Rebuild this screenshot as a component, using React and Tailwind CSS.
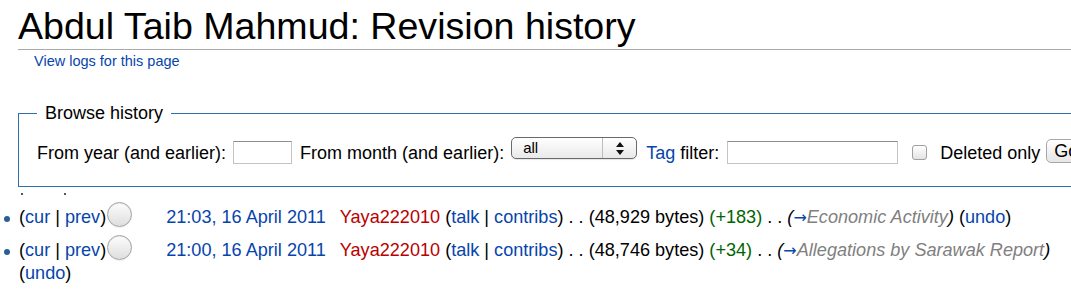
import React from "react";

const link = "text-[#0645ad]";

function Radio() {
  return (
    <span className="inline-block ml-[1px] mr-[34px] mb-[-4px] w-[25px] h-[25px] rounded-full border border-[#a3a3a3] bg-gradient-to-b from-[#fdfdfd] to-[#dedede] shadow-[inset_0_1px_1px_rgba(0,0,0,0.08),0_1px_1px_rgba(0,0,0,0.06)] align-baseline" />
  );
}

function HistoryRow({ time, size, diff, section }) {
  return (
    <li className="relative mb-[6px]">
      {/* bullet */}
      <span className="absolute left-[-15px] top-[14px] w-[6px] h-[6px] rounded-full bg-[#2b5e96]" />
      (<a className={link}>cur</a> | <a className={link}>prev</a>)
      <Radio />
      <a className={link}>{time}</a>{" "}
      <a className="ml-[9px] text-[#ba0000]">Yaya222010</a>{" "}
      (<a className={link}>talk</a> | <a className={link}>contribs</a>){" "}
      . . ({size} bytes){" "}
      <span className="text-[#006400]">({diff})</span>{" "}
      . .{" "}
      <span className="italic">
        (<a className={`${link} not-italic font-['DejaVu_Sans',sans-serif] text-[16px]`}>→</a>
        <span className="text-[#808080]">{section}</span>)
      </span>{" "}
      (<a className={link}>undo</a>)
    </li>
  );
}

function TextInput({ width }) {
  return (
    <span
      className={`block h-[23px] bg-white border border-[#c4c4c4] border-t-[#8e8e8e] ${width}`}
    />
  );
}

export default function App() {
  return (
    <div className="w-[1071px] h-[301px] overflow-hidden bg-white text-black font-['Liberation_Sans',Arial,sans-serif]">
      <div className="ml-[18px]">
        <h1 className="pt-[4px] text-[37.6px] leading-[45px] font-normal border-b border-[#aaaaaa] whitespace-nowrap">
          Abdul Taib Mahmud: Revision history
        </h1>
        <div className="mt-[2px] ml-[16px] text-[14.5px] leading-[18px]">
          <a className={link}>View logs for this page</a>
        </div>

        <fieldset className="mt-[32px] w-[1100px] border border-[#2f6fab] pl-[18px] pb-[21px]">
          <legend className="px-[8px] text-[18px] leading-[22px]">Browse history</legend>
          <div className="flex items-start h-[24px] mt-[17px] text-[18px] leading-[24px] whitespace-nowrap">
            <span>From year (and earlier):</span>
            <span className="ml-[7px]">
              <TextInput width="w-[59px]" />
            </span>
            <span className="ml-[8px]">From month (and earlier):</span>
            {/* select */}
            <span className="ml-[7px] mt-[-4px] flex h-[22px] w-[126px] rounded-[5px] border border-[#6a6a6a] bg-gradient-to-b from-white to-[#e9e9e9] shadow-[0_1px_1px_rgba(0,0,0,0.1)]">
              <span className="flex-1 pl-[11px] text-[15px] leading-[20px]">all</span>
              <span className="flex w-[34px] items-center justify-center border-l border-[#bdbdbd]">
                <svg width="8" height="13" viewBox="0 0 8 13">
                  <path d="M4 0 L8 5 L0 5 Z" fill="#111" />
                  <path d="M0 8 L8 8 L4 13 Z" fill="#111" />
                </svg>
              </span>
            </span>
            <span className="ml-[9px]">
              <a className={link}>Tag</a> filter:
            </span>
            <span className="ml-[8px]">
              <TextInput width="w-[171px]" />
            </span>
            {/* checkbox */}
            <span className="ml-[14px] mt-[4px] h-[15px] w-[15px] rounded-[3px] border border-[#a0a0a0] bg-gradient-to-b from-white to-[#e4e4e4]" />
            <span className="ml-[13px]">Deleted only</span>
            <span className="ml-[6px] mt-[-2px] h-[24px] w-[60px] rounded-[5px] border border-[#a8a8a8] bg-gradient-to-b from-white to-[#e6e6e6] pl-[7px] leading-[22px]">
              Go
            </span>
          </div>
        </fieldset>

        {/* leftover specks under the fieldset */}
        <div className="flex h-[15px] pt-[6px]">
          <span className="ml-[3px] h-[2px] w-[2px] bg-[#555]" />
          <span className="ml-[41px] h-[2px] w-[2px] bg-[#555]" />
        </div>

        <ul className="pl-[1px] text-[18.1px] leading-[23px]">
          <HistoryRow time="21:03, 16 April 2011" size="48,929" diff="+183" section="Economic Activity" />
          <HistoryRow time="21:00, 16 April 2011" size="48,746" diff="+34" section="Allegations by Sarawak Report" />
        </ul>
      </div>
    </div>
  );
}
